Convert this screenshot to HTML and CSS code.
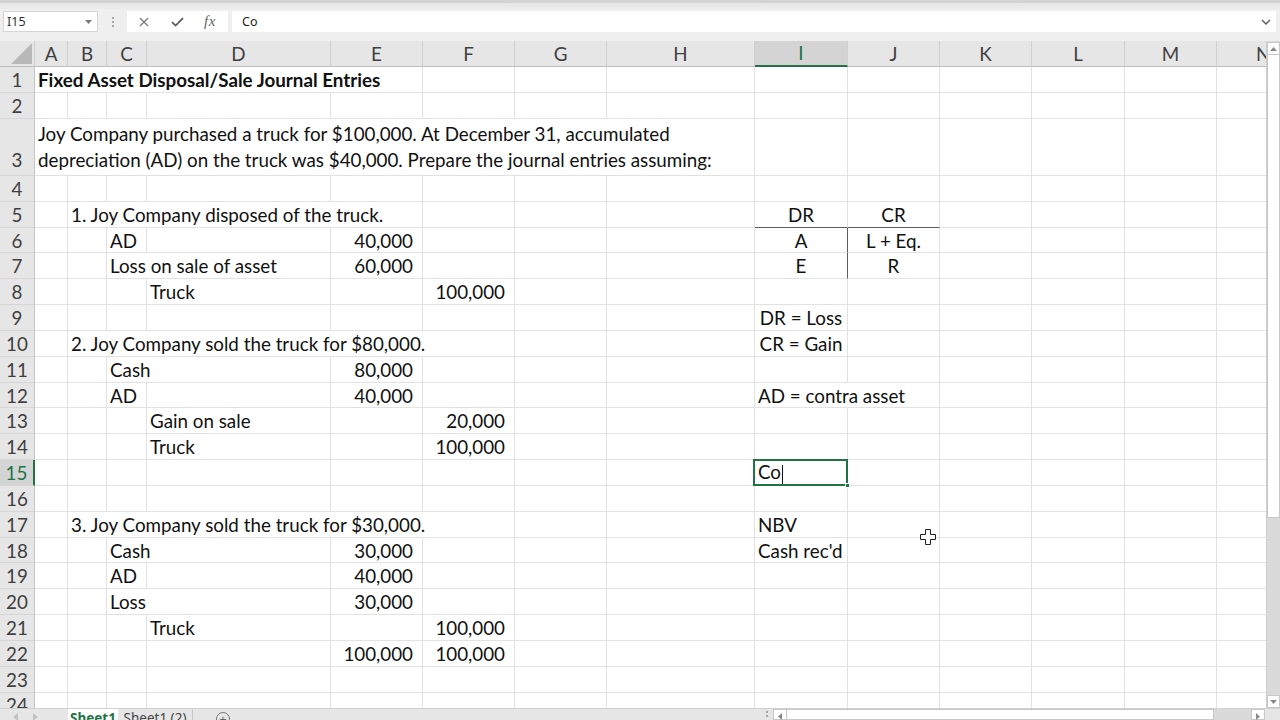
FILE: index.html
```html
<!DOCTYPE html>
<html>
<head>
<meta charset="utf-8">
<link rel="stylesheet" href="styles.css">
</head>
<body>
<div class="topstrip"></div>
<div class="fbar">
  <div class="namebox"><span>I15</span><svg class="nb-arrow" width="7" height="4" viewBox="0 0 7 4"><path d="M0 0h7L3.5 4z" fill="#7a7a7a"/></svg></div>
  <div class="fdots"><i></i><i></i><i></i></div>
  <div class="fbtns">
    <svg width="10" height="10" viewBox="0 0 10 10"><path d="M1 1L9 9M9 1L1 9" stroke="#7a7a7a" stroke-width="1.3" fill="none"/></svg>
    <svg width="13" height="10" viewBox="0 0 13 10"><path d="M1 5.2L4.6 8.6L12 1.2" stroke="#5a5a5a" stroke-width="1.8" fill="none"/></svg>
    <span class="fx">fx</span>
  </div>
  <div class="finput"><span>Co</span><svg width="10" height="6" viewBox="0 0 10 6"><path d="M1 1L5 5L9 1" stroke="#555" stroke-width="1.3" fill="none"/></svg></div>
</div>
<div class="main">
  <div class="gridwrap">
    <table class="sheet">
      <colgroup>
        <col class="w-rh"><col class="w-a"><col class="w-b"><col class="w-c"><col class="w-d"><col class="w-92"><col class="w-92"><col class="w-92"><col class="w-h"><col class="w-93"><col class="w-92"><col class="w-92"><col class="w-93"><col class="w-92"><col class="w-92">
      </colgroup>
      <tr class="hdr"><th class="corner"><span class="tri"></span></th><th>A</th><th>B</th><th>C</th><th>D</th><th>E</th><th>F</th><th>G</th><th>H</th><th class="csel">I</th><th>J</th><th>K</th><th>L</th><th>M</th><th class="cn">N</th></tr>
      <tr class="r26"><td class="rh">1</td><td colspan="5" class="b">Fixed Asset Disposal/Sale Journal Entries</td><td></td><td></td><td></td><td></td><td></td><td></td><td></td><td></td><td></td></tr>
      <tr class="r26"><td class="rh">2</td><td></td><td></td><td></td><td></td><td></td><td></td><td></td><td></td><td></td><td></td><td></td><td></td><td></td><td></td></tr>
      <tr class="r57"><td class="rh rh-bottom">3</td><td colspan="8" class="wrap">Joy Company purchased a truck for $100,000. At December 31, accumulated<br>depreciation (AD) on the truck was $40,000. Prepare the journal entries assuming:</td><td></td><td></td><td></td><td></td><td></td><td></td></tr>
      <tr><td class="rh">4</td><td></td><td></td><td></td><td></td><td></td><td></td><td></td><td></td><td></td><td></td><td></td><td></td><td></td><td></td></tr>
      <tr><td class="rh">5</td><td></td><td colspan="4">1. Joy Company disposed of the truck.</td><td></td><td></td><td></td><td class="c bb">DR</td><td class="c bb">CR</td><td></td><td></td><td></td><td></td></tr>
      <tr><td class="rh">6</td><td></td><td></td><td>AD</td><td></td><td class="n">40,000</td><td></td><td></td><td></td><td class="c br">A</td><td class="c">L + Eq.</td><td></td><td></td><td></td><td></td></tr>
      <tr><td class="rh">7</td><td></td><td></td><td colspan="2">Loss on sale of asset</td><td class="n">60,000</td><td></td><td></td><td></td><td class="c br">E</td><td class="c">R</td><td></td><td></td><td></td><td></td></tr>
      <tr><td class="rh">8</td><td></td><td></td><td></td><td>Truck</td><td></td><td class="n">100,000</td><td></td><td></td><td></td><td></td><td></td><td></td><td></td><td></td></tr>
      <tr><td class="rh">9</td><td></td><td></td><td></td><td></td><td></td><td></td><td></td><td></td><td class="c">DR = Loss</td><td></td><td></td><td></td><td></td><td></td></tr>
      <tr><td class="rh">10</td><td></td><td colspan="5">2. Joy Company sold the truck for $80,000.</td><td></td><td></td><td class="c">CR = Gain</td><td></td><td></td><td></td><td></td><td></td></tr>
      <tr><td class="rh">11</td><td></td><td></td><td colspan="2">Cash</td><td class="n">80,000</td><td></td><td></td><td></td><td></td><td></td><td></td><td></td><td></td><td></td></tr>
      <tr><td class="rh">12</td><td></td><td></td><td>AD</td><td></td><td class="n">40,000</td><td></td><td></td><td></td><td colspan="2">AD = contra asset</td><td></td><td></td><td></td><td></td></tr>
      <tr><td class="rh">13</td><td></td><td></td><td></td><td>Gain on sale</td><td></td><td class="n">20,000</td><td></td><td></td><td></td><td></td><td></td><td></td><td></td><td></td></tr>
      <tr><td class="rh">14</td><td></td><td></td><td></td><td>Truck</td><td></td><td class="n">100,000</td><td></td><td></td><td></td><td></td><td></td><td></td><td></td><td></td></tr>
      <tr><td class="rh rsel">15</td><td></td><td></td><td></td><td></td><td></td><td></td><td></td><td></td><td class="sel">Co<span class="caret"></span><span class="handle"></span></td><td></td><td></td><td></td><td></td><td></td></tr>
      <tr><td class="rh">16</td><td></td><td></td><td></td><td></td><td></td><td></td><td></td><td></td><td></td><td></td><td></td><td></td><td></td><td></td></tr>
      <tr><td class="rh">17</td><td></td><td colspan="5">3. Joy Company sold the truck for $30,000.</td><td></td><td></td><td>NBV</td><td></td><td></td><td></td><td></td><td></td></tr>
      <tr><td class="rh">18</td><td></td><td></td><td colspan="2">Cash</td><td class="n">30,000</td><td></td><td></td><td></td><td>Cash rec'd</td><td></td><td></td><td></td><td></td><td></td></tr>
      <tr><td class="rh">19</td><td></td><td></td><td>AD</td><td></td><td class="n">40,000</td><td></td><td></td><td></td><td></td><td></td><td></td><td></td><td></td><td></td></tr>
      <tr><td class="rh">20</td><td></td><td></td><td colspan="2">Loss</td><td class="n">30,000</td><td></td><td></td><td></td><td></td><td></td><td></td><td></td><td></td><td></td></tr>
      <tr><td class="rh">21</td><td></td><td></td><td></td><td>Truck</td><td></td><td class="n">100,000</td><td></td><td></td><td></td><td></td><td></td><td></td><td></td><td></td></tr>
      <tr><td class="rh">22</td><td></td><td></td><td></td><td></td><td class="n">100,000</td><td class="n">100,000</td><td></td><td></td><td></td><td></td><td></td><td></td><td></td><td></td></tr>
      <tr><td class="rh">23</td><td></td><td></td><td></td><td></td><td></td><td></td><td></td><td></td><td></td><td></td><td></td><td></td><td></td><td></td></tr>
      <tr><td class="rh">24</td><td></td><td></td><td></td><td></td><td></td><td></td><td></td><td></td><td></td><td></td><td></td><td></td><td></td><td></td></tr>
    </table>
  </div>
  <div class="vscroll">
    <div class="vbtn"><svg width="7" height="4" viewBox="0 0 7 4"><path d="M0 4h7L3.5 0z" fill="#8a8a8a"/></svg></div>
    <div class="vthumb"></div>
    <div class="vtrack"></div>
    <div class="vbtn"><svg width="7" height="4" viewBox="0 0 7 4"><path d="M0 0h7L3.5 4z" fill="#8a8a8a"/></svg></div>
  </div>
</div>
<div class="tabbar">
  <div class="nav"><svg width="5" height="8" viewBox="0 0 5 8"><path d="M5 0v8L0 4z" fill="#c2c2c2"/></svg><svg width="5" height="8" viewBox="0 0 5 8"><path d="M0 0v8L5 4z" fill="#c2c2c2"/></svg></div>
  <div class="tab active">Sheet1</div>
  <div class="tab">Sheet1 (2)</div>
  <div class="addtab"><span class="plus">+</span></div>
  <div class="spacer"></div>
  <div class="hdots"><i></i><i></i></div>
  <div class="hbtn"><svg width="4" height="7" viewBox="0 0 4 7"><path d="M4 0v7L0 3.5z" fill="#8a8a8a"/></svg></div>
  <div class="hthumb"></div>
  <div class="htrack"></div>
  <div class="hbtn"><svg width="4" height="7" viewBox="0 0 4 7"><path d="M0 0v7L4 3.5z" fill="#8a8a8a"/></svg></div>
  <div class="hcorner"></div>
</div>
<svg class="movecursor" width="16" height="16" viewBox="0 0 16 16"><path d="M5.5 0.5h5v5h5v5h-5v5h-5v-5h-5v-5h5z" fill="#fff" stroke="#222" stroke-width="1" stroke-linejoin="round"/></svg>
</body>
</html>
```

FILE: styles.css
```css
* { box-sizing: border-box; }
html, body { margin: 0; padding: 0; }
body {
  width: 1280px;
  height: 720px;
  overflow: hidden;
  position: relative;
  background: #e6e6e6;
  font-family: "Lato", "Liberation Sans", sans-serif;
}

/* top ribbon remnant */
.topstrip {
  height: 9px;
  background: linear-gradient(#d3d3d3 0, #d3d3d3 3px, #e4e4e4 3px, #ececec 9px);
}

/* formula bar */
.fbar {
  height: 32px;
  background: #efefef;
  display: flex;
  align-items: flex-start;
  padding-top: 2px;
}
.namebox {
  margin-left: 3px;
  width: 95px;
  height: 21px;
  background: #fff;
  border: 1px solid #d6d6d6;
  display: flex;
  align-items: center;
  justify-content: space-between;
  padding: 0 5px 0 3px;
  font: 12.5px "Noto Sans", sans-serif;
  color: #333;
}
.fdots {
  width: 29px;
  height: 21px;
  display: flex;
  flex-direction: column;
  align-items: center;
  justify-content: center;
  gap: 2px;
}
.fdots i {
  display: block;
  width: 2px;
  height: 2px;
  background: #a8a8a8;
}
.fbtns {
  width: 101px;
  height: 21px;
  background: #fff;
  display: flex;
  align-items: center;
  padding-left: 12px;
}
.fbtns svg:first-child { margin-right: 22px; }
.fbtns svg:nth-child(2) { margin-right: 20px; }
.fx {
  font: italic 15px "Liberation Serif", serif;
  color: #666;
  letter-spacing: 0.5px;
}
.finput {
  margin-left: 4px;
  width: 1044px;
  height: 21px;
  background: #fff;
  display: flex;
  align-items: center;
  justify-content: space-between;
  padding: 0 5px 0 10px;
  font: 12.5px "Noto Sans", sans-serif;
  color: #222;
}

/* main sheet area */
.main {
  height: 667px;
  display: flex;
}
.gridwrap {
  width: 1266px;
  height: 667px;
  overflow: hidden;
  background: #fff;
}
.sheet {
  table-layout: fixed;
  width: 1309px;
  border-collapse: separate;
  border-spacing: 0;
  font-size: 18.8px;
  color: #111;
}
.w-rh { width: 35px; }
.w-a { width: 33px; }
.w-b { width: 39px; }
.w-c { width: 40px; }
.w-d { width: 184px; }
.w-h { width: 148px; }
.w-92 { width: 92px; }
.w-93 { width: 93px; }

.sheet tr { height: 25.83px; }
.sheet tr.hdr { height: 26px; }
.sheet tr.r26 { height: 26px; }
.sheet tr.r57 { height: 57px; }

.sheet td {
  border-right: 1px solid #e2e2e2;
  border-bottom: 1px solid #e2e2e2;
  padding: 1px 0 0 3px;
  white-space: nowrap;
  overflow: hidden;
  vertical-align: middle;
  line-height: 20px;
}
.sheet th {
  background: #e6e6e6;
  border-right: 1px solid #d0d0d0;
  border-bottom: 1px solid #bdbdbd;
  font-weight: normal;
  color: #404040;
  text-align: center;
  padding: 0;
  line-height: 20px;
  vertical-align: middle;
}
.sheet th.cn { text-align: left; padding-left: 39px; }
.sheet th.csel {
  background: #d4d4d4;
  color: #217346;
  border-bottom: 2px solid #217346;
}
.corner { position: relative; }
.tri {
  position: absolute;
  right: 2px;
  bottom: 2px;
  width: 0;
  height: 0;
  border-left: 21px solid transparent;
  border-bottom: 21px solid #b8b8b8;
}

.sheet td.rh {
  background: #e6e6e6;
  border-right: 1px solid #c4c4c4;
  border-bottom: 1px solid #d6d6d6;
  color: #404040;
  text-align: center;
  padding: 1px 0 0 0;
}
.sheet td.rh-bottom { vertical-align: bottom; padding: 0 0 2px 0; line-height: 26px; }
.sheet td.rsel {
  background: #d4d4d4;
  color: #217346;
  border-right: 2px solid #217346;
}

.sheet td.b { font-weight: 700; }
.sheet td.n { text-align: right; padding: 1px 9px 0 0; }
.sheet td.c { text-align: center; padding: 1px 0 0 0; }
.sheet td.bb { border-bottom-color: #5c5c5c; }
.sheet td.br { border-right-color: #5c5c5c; }
.sheet td.wrap {
  white-space: normal;
  vertical-align: bottom;
  line-height: 26px;
  padding: 0 0 2px 3px;
}
.sheet td.sel {
  position: relative;
  overflow: visible;
}
.sheet td.sel::after {
  content: "";
  position: absolute;
  left: -2px;
  top: -1px;
  right: -1px;
  bottom: -1px;
  border: 2px solid #217346;
}
.caret {
  display: inline-block;
  width: 1px;
  height: 19px;
  background: #111;
  vertical-align: middle;
  margin-left: 1px;
}
.handle {
  position: absolute;
  right: -3px;
  bottom: -3px;
  width: 5px;
  height: 5px;
  background: #217346;
  border: 1px solid #fff;
  z-index: 2;
}

/* vertical scrollbar */
.vscroll {
  width: 14px;
  height: 667px;
  background: #dadada;
  border-left: 1px solid #cdcdcd;
  display: flex;
  flex-direction: column;
  padding-top: 1px;
}
.vbtn {
  height: 13px;
  background: #fff;
  border: 1px solid #c8c8c8;
  display: flex;
  align-items: center;
  justify-content: center;
}
.vthumb {
  height: 463px;
  background: #fff;
  border: 1px solid #c8c8c8;
  border-top: 0;
}
.vtrack { flex: 1; }

/* sheet tabs */
.tabbar {
  height: 12px;
  overflow: hidden;
  display: flex;
  background: #e6e6e6;
  border-top: 1px solid #d0d0d0;
  font: 13.5px "Noto Sans", sans-serif;
  line-height: 16px;
}
.nav {
  width: 68px;
  display: flex;
  gap: 15px;
  padding: 4px 0 0 13px;
}
.tab {
  width: 75px;
  text-align: center;
  color: #444;
  border-right: 1px solid #c6c6c6;
  padding-top: 1px;
}
.tab.active {
  width: 50px;
  background: #fff;
  color: #217346;
  font-weight: 700;
  border-right: 0;
}
.addtab {
  width: 60px;
  padding: 2px 0 0 23px;
}
.plus {
  display: inline-block;
  width: 14px;
  height: 14px;
  border: 1px solid #7a7a7a;
  border-radius: 50%;
  text-align: center;
  line-height: 12px;
  font-size: 13px;
  color: #666;
}
.spacer { flex: 1; }
.hdots {
  width: 12px;
  display: flex;
  flex-direction: column;
  align-items: center;
  gap: 2px;
  padding-top: 2px;
}
.hdots i {
  display: block;
  width: 2px;
  height: 2px;
  background: #a8a8a8;
}
.hbtn {
  width: 14px;
  background: #fff;
  border: 1px solid #c8c8c8;
  display: flex;
  justify-content: center;
  padding-top: 3px;
}
.hthumb {
  width: 427px;
  background: #fff;
  border: 1px solid #c8c8c8;
  border-left: 0;
}
.htrack { width: 37px; background: #dadada; }
.hcorner { width: 15px; background: #e6e6e6; }

/* mouse pointer over the grid */
.movecursor {
  position: absolute;
  left: 920px;
  top: 529px;
}
```
